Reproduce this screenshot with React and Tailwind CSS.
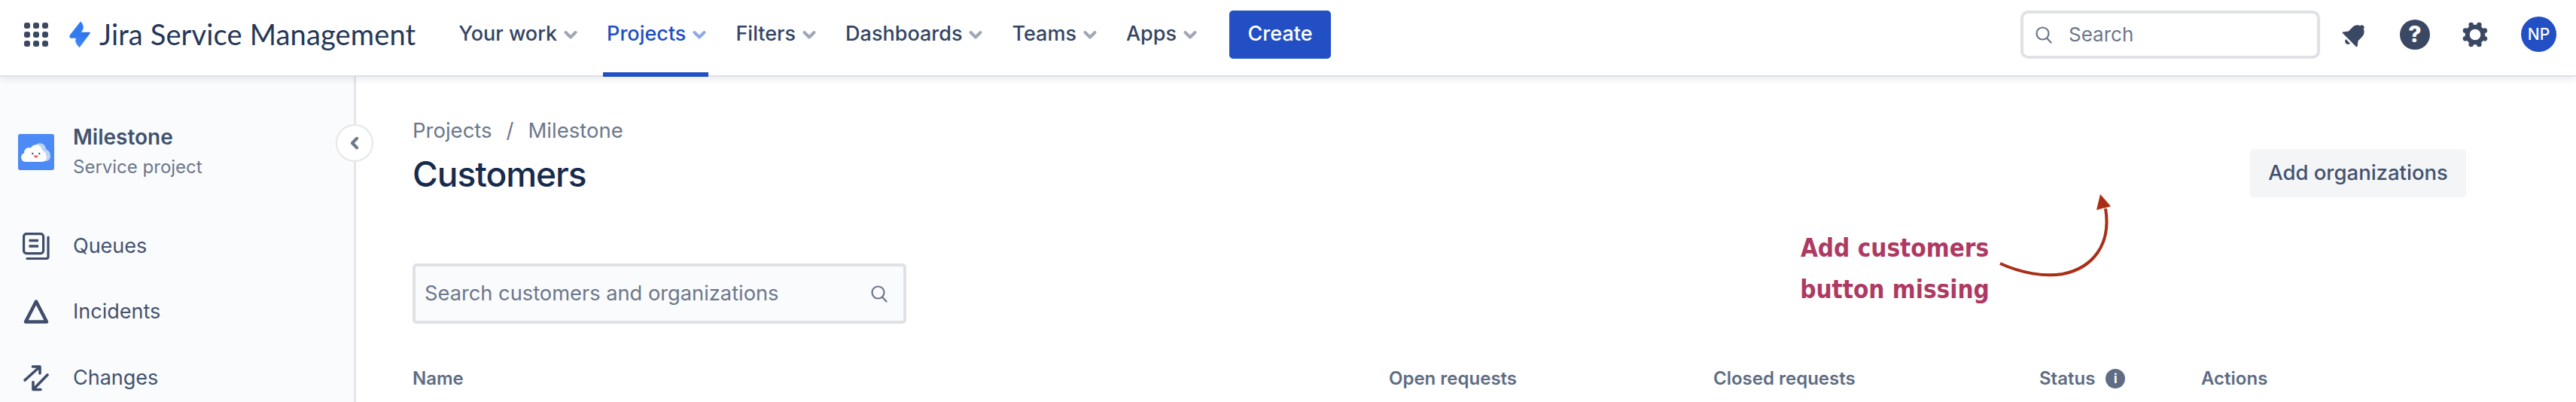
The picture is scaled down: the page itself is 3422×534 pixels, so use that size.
import React from 'react';

const navItems = ['Your work', 'Projects', 'Filters', 'Dashboards', 'Teams', 'Apps'];

const Chevron = ({ className }) => (
    <svg viewBox="0 0 24 24" className={className} fill="none" stroke="currentColor" strokeWidth="4" strokeLinecap="round" strokeLinejoin="round">
        <path d="M5.500 9 12 15.500 18.500 9" />
    </svg>
);

const SearchIcon = ({ className }) => (
    <svg viewBox="0 0 24 24" className={className} fill="none" stroke="currentColor" strokeWidth="2.2" strokeLinecap="round">
        <circle cx="10.500" cy="10.500" r="8" />
        <path d="m16 16.500 5.500 6" />
    </svg>
);

const AppGrid = () => (
    <svg viewBox="0 0 32 32" className="w-8 h-8 text-[#3b4863]" fill="currentColor">
        {[0, 12, 24].map(y => [0, 12, 24].map(x => (
            <rect key={`${x}-${y}`} x={x} y={y} width="8" height="8" rx="3" />
        )))}
    </svg>
);

const Bolt = () => (
    <svg viewBox="0 0 28 36" className="w-7 h-9">
        <defs>
            <linearGradient id="boltLow" x1="0.7" y1="0" x2="0.3" y2="1">
                <stop offset="0" stopColor="#2f6fe8" />
                <stop offset="1" stopColor="#3d8bfd" />
            </linearGradient>
        </defs>
        <path d="M15 .5 .7 18.800c-.6.9-.2 3.900 1.300 3.900h7.700C13 19 18.800 12 18.800 8.500c0-3-2-6.500-3.800-8z" fill="#2f7bf0" />
        <path d="M15.500 14.700H27c.8 0 1.200.6.800 1.200L13.500 35.300C11.500 33 7.800 29 8.200 25.500c.3-3.500 4-7.500 7.300-10.800z" fill="url(#boltLow)" />
    </svg>
);

const Bell = () => (
    <svg viewBox="0 0 36 36" className="w-9 h-9 text-[#3b4863]" fill="currentColor">
        <g transform="rotate(45 18 18)">
            <circle cx="18" cy="4.500" r="3" />
            <path d="M18 4c-6 0-9 4.500-9 9.500v7L4.500 26.500c-.5.8 0 1.500.8 1.500h25.400c.8 0 1.300-.7.8-1.500L27 20.500v-7C27 8.500 24 4 18 4z" />
            <path d="M14 30.500h8c0 2.300-1.800 4-4 4s-4-1.700-4-4z" />
        </g>
    </svg>
);

const Gear = () => (
    <svg viewBox="0 0 36 36" className="w-9 h-9 text-[#3b4863]">
        <circle cx="18" cy="18" r="10.300" fill="none" stroke="currentColor" strokeWidth="6" />
        {[22.5, 67.5, 112.5, 157.5, 202.5, 247.5, 292.5, 337.5].map(a => (
            <circle
                key={a}
                cx={18 + 14 * Math.cos((a * Math.PI) / 180)}
                cy={18 + 14 * Math.sin((a * Math.PI) / 180)}
                r="3.300"
                fill="currentColor"
            />
        ))}
    </svg>
);

const CloudLogo = () => (
    <svg viewBox="0 0 48 48" className="w-12 h-12 rounded-[3px]">
        <rect width="48" height="48" fill="#4c8bf5" />
        <g fill="#bcd3f8">
            <circle cx="29" cy="20.500" r="8.200" />
            <circle cx="36" cy="27" r="6.500" />
            <rect x="20" y="24" width="23" height="12" rx="6" />
        </g>
        <g fill="#fff">
            <circle cx="24" cy="22.500" r="8.200" />
            <circle cx="14.500" cy="24.500" r="6.500" />
            <circle cx="31" cy="28" r="6" />
            <rect x="4" y="25" width="34" height="12" rx="6" />
        </g>
        <circle cx="19.300" cy="26" r="1.200" fill="#42526e" />
        <circle cx="28.300" cy="26" r="1.200" fill="#42526e" />
        <path d="M21 28.500h5.500c0 1.900-1.200 3-2.700 3s-2.800-1.100-2.800-3z" fill="#ef5c48" />
    </svg>
);

const QueuesIcon = () => (
    <svg viewBox="0 0 36 36" className="w-9 h-9 text-[#3f4d6b]" fill="none" stroke="currentColor" strokeWidth="3.200">
        <rect x="1.600" y="1.600" width="26" height="26" rx="3.500" />
        <path d="M8.500 10.500h12.500M8.500 18h12.500" strokeWidth="3.400" />
        <path d="M34 6v26a2.500 2.500 0 0 1-2.500 2.500H6" strokeLinecap="round" />
    </svg>
);

const IncidentsIcon = () => (
    <svg viewBox="0 0 36 36" className="w-9 h-9 text-[#3f4d6b]" fill="none" stroke="currentColor" strokeWidth="4.500" strokeLinejoin="round">
        <path d="M18 4.500 4 31.500h28z" />
    </svg>
);

const ChangesIcon = () => (
    <svg viewBox="0 0 36 36" className="w-9 h-9 text-[#3f4d6b]" fill="none" stroke="currentColor" strokeWidth="3.600" strokeLinecap="round" strokeLinejoin="round">
        <path d="M3 21 22.500 3.500M13.500 3H23v9" />
        <path d="M33 14 14.500 33M14 23.500V33.500h10" />
    </svg>
);

const SideItem = ({ icon, label }) => (
    <div className="flex items-center h-[87.500px] pl-[30px] gap-[31px] text-[27px] text-[#42526e]">
        {icon}
        <span>{label}</span>
    </div>
);

export default function App() {
    return (
        <div className="w-[3422px] h-[534px] overflow-hidden bg-white flex flex-col font-['Inter',sans-serif]">
            {/* Top bar */}
            <header className="h-[102px] shrink-0 flex items-center pl-8 pr-[26px] pb-[9px] border-b-2 border-[#dfe1e6] shadow-[0_4px_8px_rgba(9,30,66,0.08)] relative z-10 bg-white">
                <AppGrid />
                <div className="ml-7 flex items-center gap-3">
                    <Bolt />
                    <span className="font-['Lato',sans-serif] text-[38px] text-[#253858] tracking-[0.15px] whitespace-nowrap">Jira Service Management</span>
                </div>
                <nav className="flex items-stretch self-stretch mb-[-9px] ml-[49px] gap-5">
                    {navItems.map(item => {
                        const active = item === 'Projects';
                        return (
                            <div
                                key={item}
                                className={`relative flex items-center gap-1.5 px-2 pb-[9px] text-[27px] font-medium whitespace-nowrap ${active ? 'text-[#1f4fc4]' : 'text-[#344563]'}`}
                            >
                                {item}
                                <Chevron className={`w-6 h-6 ${active ? 'text-[#8fa9e6]' : 'text-[#a0a6b6]'}`} />
                                {active && <div className="absolute left-[3px] right-2 bottom-[-2px] h-[6px] bg-[#2250c4]" />}
                            </div>
                        );
                    })}
                </nav>
                <button className="ml-8 w-[135px] h-16 rounded-[5px] bg-[#2250c4] text-white text-[27px] font-medium">Create</button>
                <div className="ml-auto flex items-center">
                    <div className="w-[398px] h-16 rounded-[10px] border-[4px] border-[#dfe1e6] flex items-center pl-[15px] gap-[21px] text-[26px] text-[#6b778c]">
                        <SearchIcon className="w-6 h-6" />
                        <span>Search</span>
                    </div>
                    <div className="ml-7"><Bell /></div>
                    <div className="ml-[42px] w-10 h-10 rounded-full bg-[#3b4863] text-white flex items-center justify-center text-[30px] font-extrabold">?</div>
                    <div className="ml-[42px]"><Gear /></div>
                    <div className="ml-[43px] w-[47px] h-[47px] rounded-full bg-[#2250c4] text-white flex items-center justify-center text-[21px] font-medium">NP</div>
                </div>
            </header>

            <div className="flex flex-1 min-h-0">
                {/* Sidebar */}
                <aside className="w-[473px] shrink-0 relative bg-[#fafbfc] border-r-[3px] border-[#e4e6ea]">
                    <div className="flex items-center pl-6 pt-[60px] gap-[25px]">
                        <CloudLogo />
                        <div>
                            <div className="text-[28px] leading-[40px] font-semibold text-[#42526e]">Milestone</div>
                            <div className="text-[24px] leading-[40px] text-[#6b778c]">Service project</div>
                        </div>
                    </div>
                    <div className="mt-[41px]">
                        <SideItem icon={<QueuesIcon />} label="Queues" />
                        <SideItem icon={<IncidentsIcon />} label="Incidents" />
                        <SideItem icon={<ChangesIcon />} label="Changes" />
                    </div>
                    <div className="absolute top-[63px] left-[446px] w-[50px] h-[50px] rounded-full bg-white border-2 border-[#e4e6ea] flex items-center justify-center text-[#6b778c]">
                        <svg viewBox="0 0 16 16" className="w-5 h-5" fill="none" stroke="currentColor" strokeWidth="3.200" strokeLinecap="round" strokeLinejoin="round">
                            <path d="M10.500 3 5.500 8l5 5" />
                        </svg>
                    </div>
                </aside>

                {/* Main content */}
                <main className="flex-1 relative pl-[75px] pr-[146px]">
                    <div className="flex items-center mt-14 h-8 text-[27.500px] text-[#6b778c]">
                        <span>Projects</span>
                        <span className="mx-[19px]">/</span>
                        <span>Milestone</span>
                    </div>
                    <div className="flex justify-between items-start">
                        <h1 className="mt-[13px] text-[46px] leading-[56px] font-medium text-[#172b4d] tracking-[-1px]">Customers</h1>
                        <button className="mt-2 w-[287px] h-16 rounded-[5px] bg-[#f4f5f7] text-[27.500px] font-medium text-[#42526e] whitespace-nowrap">Add organizations</button>
                    </div>
                    <div className="mt-[88px] w-[656px] h-20 rounded-[5px] border-[4px] border-[#dfe1e6] bg-[#fafbfc] flex items-center justify-between pl-3 pr-5 text-[27.250px] text-[#6b778c]">
                        <span>Search customers and organizations</span>
                        <SearchIcon className="w-6 h-6" />
                    </div>
                    <div className="mt-[58px] grid grid-cols-[1297px_431px_433px_215px_1fr] text-[24px] leading-[30px] font-semibold text-[#5e6c84]">
                        <span>Name</span>
                        <span>Open requests</span>
                        <span>Closed requests</span>
                        <span className="flex items-center gap-[14px]">
                            Status
                            <span className="w-[26px] h-[26px] rounded-full bg-[#5e6c84] text-white text-[17px] font-bold flex items-center justify-center">i</span>
                        </span>
                        <span>Actions</span>
                    </div>

                    {/* Annotation over the page */}
                    <div className="absolute left-[1894px] top-[200px] w-[300px] text-center font-['DejaVu_Sans',sans-serif] [font-stretch:condensed] font-bold text-[33px] leading-[55px] text-[#ad3a63] whitespace-nowrap">
                        <div>Add customers</div>
                        <div>button missing</div>
                    </div>
                    <svg className="absolute left-[2177px] top-[148px] w-[170px] h-[125px]" viewBox="0 0 170 125" fill="none">
                        <path d="M7 100C36 113 66 118 90 114C130 106 155 75 147 27" stroke="#a92e16" strokeWidth="4" />
                        <path d="M140 8 135 29 154 24z" fill="#a92e16" />
                    </svg>
                </main>
            </div>
        </div>
    );
}
